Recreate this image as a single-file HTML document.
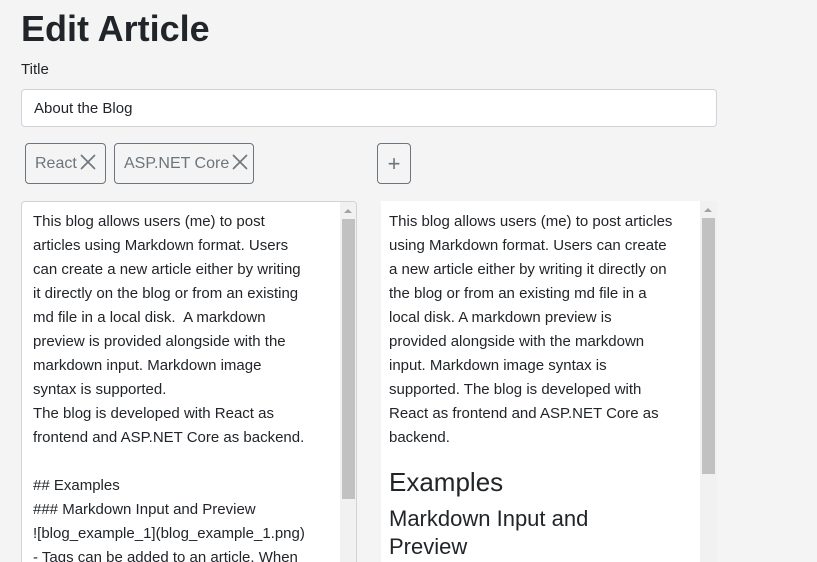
<!DOCTYPE html>
<html style="height:562px;overflow:hidden"><head><style>
body{margin:0;background:#f4f4f4;font-family:"Liberation Sans",sans-serif;color:#212529;width:817px;height:562px;overflow:hidden;position:relative}
div{position:absolute;box-sizing:border-box}
.t{font-size:15px;line-height:24px;white-space:nowrap}
.tag{top:143px;height:41px;border:1px solid #6c757d;border-radius:4px;color:#6c757d;font-size:16px;line-height:39px;padding-left:9px}
.sb{background:#f1f1f1}
.th{background:#c1c1c1}
.ar{width:0;height:0;border-left:4px solid transparent;border-right:4px solid transparent;border-bottom:4px solid #a3a3a3}
.x{display:inline-block;width:16px;height:16px;vertical-align:-2px;margin-left:3px}
</style></head><body>
<div style="left:21px;top:6px;font-size:36px;font-weight:bold;line-height:46px">Edit Article</div>
<div style="left:21px;top:60px;font-size:15px;line-height:20px">Title</div>
<div style="left:21px;top:89px;width:696px;height:38px;background:#fff;border:1px solid #ced4da;border-radius:4px;padding-left:12px;font-size:15px;line-height:38px">About the Blog</div>
<div class="tag" style="left:25px;width:81px">React<svg class="x" viewBox="0 0 16 16"><path d="M1 1L15 15M15 1L1 15" stroke="#6c757d" stroke-width="1.6"/></svg></div>
<div class="tag" style="left:114px;width:140px">ASP.NET Core<svg class="x" viewBox="0 0 16 16"><path d="M1 1L15 15M15 1L1 15" stroke="#6c757d" stroke-width="1.6"/></svg></div>
<div class="tag" style="left:377px;width:34px;padding:0;text-align:center;font-size:22px">+</div>
<div style="left:21px;top:201px;width:336px;height:380px;background:#fff;border:1px solid #ced4da;border-radius:4px;overflow:hidden">
<div class="t" style="left:11px;top:8px">This blog allows users (me) to post<br>articles using Markdown format. Users<br>can create a new article either by writing<br>it directly on the blog or from an existing<br>md file in a local disk.&nbsp; A markdown<br>preview is provided alongside with the<br>markdown input. Markdown image<br>syntax is supported.<br>The blog is developed with React as<br>frontend and ASP.NET Core as backend.<br><br>## Examples<br>### Markdown Input and Preview<br>![blog_example_1](blog_example_1.png)<br>- Tags can be added to an article. When</div>
<div class="sb" style="left:318px;top:0;width:16px;height:380px"></div>
<div class="ar" style="left:322px;top:7px"></div>
<div class="th" style="left:320px;top:17px;width:13px;height:280px"></div>
</div>
<div style="left:381px;top:201px;width:336px;height:361px;background:#fff">
<div class="t" style="left:8px;top:9px">This blog allows users (me) to post articles<br>using Markdown format. Users can create<br>a new article either by writing it directly on<br>the blog or from an existing md file in a<br>local disk. A markdown preview is<br>provided alongside with the markdown<br>input. Markdown image syntax is<br>supported. The blog is developed with<br>React as frontend and ASP.NET Core as<br>backend.</div>
<div style="left:8px;top:264px;font-size:26px;line-height:34px">Examples</div>
<div style="left:8px;top:304px;font-size:22px;line-height:28px">Markdown Input and<br>Preview</div>
<div class="sb" style="left:319px;top:0;width:17px;height:361px"></div>
<div class="ar" style="left:323px;top:7px"></div>
<div class="th" style="left:321px;top:17px;width:13px;height:256px"></div>
</div>
</body></html>
